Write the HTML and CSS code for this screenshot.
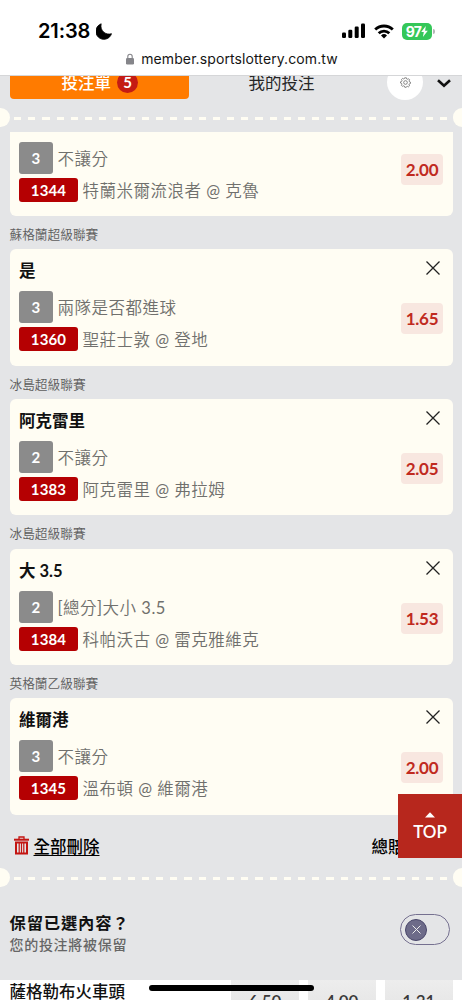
FILE: index.html
```html
<!DOCTYPE html>
<html lang="zh-Hant">
<head>
<meta charset="utf-8">
<title>投注單</title>
<link rel="stylesheet" href="styles.css">
</head>
<body>
<div class="screen">
  <header class="browser">
    <div class="status">
      <span class="time">21:38</span>
      <svg class="moon" width="16" height="17" viewBox="0 0 16 17"><path d="M5.200.8A8 8 0 1 0 15.500 10.700C9.500 12.500 3.600 7.500 5.200.8z" stroke="#000" stroke-width=".8" stroke-linejoin="round"/></svg>
      <svg class="signal" width="24" height="16" viewBox="0 0 24 16"><rect x="0" y="9.500" width="4" height="5.500" rx="1.200"/><rect x="6.300" y="6.700" width="4" height="8.300" rx="1.200"/><rect x="12.700" y="3.600" width="4" height="11.400" rx="1.200"/><rect x="19" y="0.500" width="4" height="14.500" rx="1.200"/></svg>
      <svg class="wifi" width="20" height="15" viewBox="0 0 20 15" fill="none" stroke="#000" stroke-width="2.800"><path d="M1.200 5.600a12.600 12.600 0 0 1 17.600 0"/><path d="M4.700 9.200a7.600 7.600 0 0 1 10.600 0"/><path d="M10 14.500l-3-3.100a4.300 4.300 0 0 1 6 0z" fill="#000" stroke="none"/></svg>
      <span class="battery">97<svg width="7" height="11" viewBox="0 0 7 11"><path d="M4.800 0L.2 6h2.600L1.900 11 6.800 4.700H4.100z" fill="#fff"/></svg></span>
      <i class="battery-tip"></i>
    </div>
    <div class="address">
      <svg width="8" height="12" viewBox="0 0 8 12"><rect y="5" width="8" height="6.500" rx="1.300" fill="#85858a"/><path d="M1.800 5.500V3.400a2.200 2.200 0 0 1 4.400 0v2.100" fill="none" stroke="#85858a" stroke-width="1.100"/></svg>
      <span>member.sportslottery.com.tw</span>
    </div>
  </header>

  <nav class="tabs">
    <div class="tab active"><span>投注單</span><b>5</b></div>
    <div class="tab">我的投注</div>
    <div class="gear"><svg width="11" height="11" viewBox="0 0 12 12" fill="none" stroke="#606060" stroke-width=".8"><path d="M5 .9h2l.3 1.200 1 .4 1.100-.6 1.200 1.300-.7 1 .4 1 1.100.4v1.500l-1.200.4-.4 1 .6 1.100-1.300 1.200-1-.6-1 .4L6.800 11.200H5.200l-.4-1.200-1-.4-1.100.6-1.200-1.300.6-1-.4-1L.6 6.600V5.200l1.200-.4.400-1-.6-1.100L2.900 1.500l1 .6.900-.4z"/><circle cx="6" cy="6" r="2"/></svg></div>
    <svg class="chevron" width="14" height="9" viewBox="0 0 14 9" fill="none" stroke="#111" stroke-width="2.600"><path d="M1 1.300l6 5.500 6-5.500"/></svg>
  </nav>

  <div class="tear"><i></i><span></span><i></i></div>

  <main class="slip">
    <section class="card cut">
      <div class="bet">
        <div class="lines">
          <div class="line"><b class="count">3</b><span>不讓分</span></div>
          <div class="line"><b class="code">1344</b><span>特蘭米爾流浪者 @ 克魯</span></div>
        </div>
        <b class="odds">2.00</b>
      </div>
    </section>
    <h3 class="league">蘇格蘭超級聯賽</h3>
    <section class="card">
      <div class="pick"><strong>是</strong><svg class="close" viewBox="0 0 14 14"><path d="M.5.5l13 13M13.500.5l-13 13"/></svg></div>
      <div class="bet">
        <div class="lines">
          <div class="line"><b class="count">3</b><span>兩隊是否都進球</span></div>
          <div class="line"><b class="code">1360</b><span>聖莊士敦 @ 登地</span></div>
        </div>
        <b class="odds">1.65</b>
      </div>
    </section>
    <h3 class="league">冰島超級聯賽</h3>
    <section class="card">
      <div class="pick"><strong>阿克雷里</strong><svg class="close" viewBox="0 0 14 14"><path d="M.5.5l13 13M13.500.5l-13 13"/></svg></div>
      <div class="bet">
        <div class="lines">
          <div class="line"><b class="count">2</b><span>不讓分</span></div>
          <div class="line"><b class="code">1383</b><span>阿克雷里 @ 弗拉姆</span></div>
        </div>
        <b class="odds">2.05</b>
      </div>
    </section>
    <h3 class="league">冰島超級聯賽</h3>
    <section class="card">
      <div class="pick"><strong>大 3.5</strong><svg class="close" viewBox="0 0 14 14"><path d="M.5.5l13 13M13.500.5l-13 13"/></svg></div>
      <div class="bet">
        <div class="lines">
          <div class="line"><b class="count">2</b><span>[總分]大小 3.5</span></div>
          <div class="line"><b class="code">1384</b><span>科帕沃古 @ 雷克雅維克</span></div>
        </div>
        <b class="odds">1.53</b>
      </div>
    </section>
    <h3 class="league">英格蘭乙級聯賽</h3>
    <section class="card">
      <div class="pick"><strong>維爾港</strong><svg class="close" viewBox="0 0 14 14"><path d="M.5.5l13 13M13.500.5l-13 13"/></svg></div>
      <div class="bet">
        <div class="lines">
          <div class="line"><b class="count">3</b><span>不讓分</span></div>
          <div class="line"><b class="code">1345</b><span>溫布頓 @ 維爾港</span></div>
        </div>
        <b class="odds">2.00</b>
      </div>
    </section>
  </main>

  <div class="summary">
    <svg width="15" height="19" viewBox="0 0 15 19" fill="none" stroke="#c31512"><path d="M0 3.700h15" stroke-width="2"/><path d="M5 3V1h5v2" stroke-width="1.300"/><path d="M2 6.500h11v11H2z" stroke-width="2"/><path d="M5.200 7v10M7.500 7v10M9.800 7v10" stroke-width="1.200"/></svg>
    <a class="clear">全部刪除</a>
    <span class="total">總賠率</span>
  </div>

  <div class="tear second"><i></i><span></span><i></i></div>

  <div class="keep">
    <div>
      <div class="keep-title">保留已選內容？</div>
      <div class="keep-note">您的投注將被保留</div>
    </div>
    <div class="toggle"><span><svg width="9" height="9" viewBox="0 0 9 9"><path d="M.5.5l8 8M8.500.5l-8 8" stroke="#eee" stroke-width="1"/></svg></span></div>
  </div>

  <div class="match">
    <span class="team">薩格勒布火車頭</span>
    <span class="price">6.50</span>
    <span class="price">4.00</span>
    <span class="price">1.31</span>
  </div>

  <div class="top"><svg width="10" height="6" viewBox="0 0 10 6"><path d="M0 5.500L5 .3l5 5.200z" fill="#fff"/></svg><span>TOP</span></div>
  <div class="home"></div>
</div>
</body>
</html>
```
FILE: styles.css
```css
* { box-sizing: border-box; }

body {
  margin: 0;
  font-family: Lato, "Noto Sans CJK TC", sans-serif;
  background: #e4e5e7;
}

svg { flex: none; }

.screen {
  position: relative;
  width: 462px;
  height: 1000px;
  overflow: hidden;
  background: #e4e5e7;
}

.browser {
  position: relative;
  z-index: 1;
  height: 76px;
  background: #fff;
  border-bottom: 1px solid #d5d6d8;
  font-family: Inter, sans-serif;
  color: #000;
}

.status {
  display: flex;
  align-items: center;
  height: 46px;
  padding: 16px 0 0 38px;
}

.time { width: 53px; font-size: 20px; line-height: 24px; font-weight: 600; white-space: nowrap; letter-spacing: -.1px; }
.moon { margin-left: 5px; }
.signal { margin-left: 230px; }
.wifi { margin-left: 8px; }

.battery {
  display: flex;
  align-items: center;
  justify-content: center;
  width: 30px;
  height: 17px;
  margin-left: 8px;
  border-radius: 5px;
  background: #35c759;
  color: #fff;
  font-size: 14px;
  font-weight: 700;
  letter-spacing: -.7px;
}

.battery-tip { width: 1.500px; height: 5px; margin-left: 1px; border-radius: 0 2px 2px 0; background: #b5b5b8; }

.address {
  display: flex;
  align-items: center;
  justify-content: center;
  gap: 7px;
  height: 25px;
  padding-left: 2px;
  font-size: 14px;
  letter-spacing: .1px;
  color: #151515;
}

.tabs {
  display: flex;
  height: 23px;
  padding-left: 9.500px;
}

.tab {
  display: flex;
  justify-content: center;
  width: 179.500px;
  height: 23px;
  font-size: 16.500px;
  line-height: 14px;
  font-weight: 400;
  color: #262626;
}

.tab + .tab { width: 185px; }

.active {
  gap: 6px;
  padding-left: 1px;
  border-radius: 0 0 4px 4px;
  background: #ff7b00;
  color: #fff;
  font-weight: 500;
}

.active b {
  width: 21px;
  height: 21px;
  margin-top: -4px;
  border-radius: 50%;
  background: #c41b14;
  text-align: center;
  font-size: 15px;
  line-height: 21px;
}

.gear {
  display: flex;
  align-items: flex-end;
  justify-content: center;
  width: 36px;
  height: 36px;
  margin: -12px 0 0 13px;
  padding-bottom: 12px;
  border-radius: 50%;
  background: #fff;
}

.chevron { margin: 3px 0 0 14px; }

.tear {
  display: flex;
  align-items: center;
  height: 19px;
  margin-top: 9px;
}

.tear i {
  flex: none;
  width: 9.500px;
  height: 19px;
  background: #fffdf3;
  border-radius: 0 10px 10px 0;
}

.tear i:last-child { border-radius: 10px 0 0 10px; }

.tear span {
  flex: 1;
  height: 2.500px;
  margin: 2px 4.500px 0;
  background: repeating-linear-gradient(90deg, #fffdf3 0 7.200px, transparent 7.200px 14.200px);
}

.slip { padding: 5px 9.500px 0; }

.card {
  height: 116.400px;
  padding: 0 9.500px;
  border-radius: 6px;
  background: #fffdf3;
}

.cut { height: 84px; padding-top: 10px; border-radius: 0 0 6px 6px; }

.pick { display: flex; justify-content: space-between; height: 42px; }
.pick strong { font-size: 16.500px; line-height: 44px; font-weight: 700; color: #111; }
.close { width: 14px; height: 14px; margin: 12px 3px 0 0; fill: none; stroke: #222; stroke-width: 1.300; }

.bet { display: flex; justify-content: space-between; }
.lines { display: flex; flex-direction: column; gap: 4px; }

.line {
  display: flex;
  align-items: center;
  gap: 4.500px;
  font-family: Lato, "Noto Sans CJK TC DemiLight", "Noto Sans CJK TC", sans-serif;
  font-size: 16.500px;
  font-weight: 400;
  letter-spacing: .5px;
  color: #70706d;
  white-space: nowrap;
}

.line span { line-height: 22px; margin-top: 2px; }
.line b { color: #fff; font-size: 15px; font-weight: 700; letter-spacing: .15px; text-align: center; border-radius: 3px; }

.count { width: 34px; height: 32px; line-height: 32px; background: #8b8b8b; }
.code { width: 59px; height: 24px; line-height: 24px; background: #b50002; }

.odds {
  width: 42px;
  height: 31px;
  margin-top: 12px;
  border-radius: 4px;
  background: #f8e7e0;
  color: #c02a20;
  font-size: 17px;
  line-height: 31px;
  font-weight: 700;
  letter-spacing: -.3px;
  text-align: center;
}

.league {
  height: 33.300px;
  margin: 0;
  font-size: 12.700px;
  line-height: 37px;
  font-weight: 350;
  color: #5d5d5d;
}

.summary {
  display: flex;
  align-items: center;
  height: 62px;
  padding: 0 41px 0 14px;
  font-size: 16.500px;
  font-weight: 500;
  color: #000;
}

.clear { margin-left: 4.500px; text-decoration: underline; text-decoration-thickness: 1px; text-underline-offset: 2px; }
.total { margin-left: auto; }

.second { margin-top: -9px; }

.keep {
  display: flex;
  justify-content: space-between;
  height: 93px;
  padding: 24px 12px 0 9.500px;
}

.keep-title { font-size: 16.300px; line-height: 23px; font-weight: 700; letter-spacing: .85px; color: #111; }
.keep-note { font-size: 14px; line-height: 22px; font-weight: 500; letter-spacing: .7px; color: #666; }

.toggle {
  width: 50px;
  height: 31px;
  margin-top: 3px;
  padding: 4px;
  border: 1px solid #757090;
  border-radius: 16px;
}

.toggle span {
  display: flex;
  align-items: center;
  justify-content: center;
  width: 22px;
  height: 22px;
  border: 1px solid #49466a;
  border-radius: 50%;
  background: #6d6b89;
}

.match {
  display: flex;
  height: 20px;
  padding-left: 9.500px;
  overflow: hidden;
  background: #fff;
}

.team { width: 221.500px; font-size: 16.500px; line-height: 24px; font-weight: 500; color: #111; }

.price {
  width: 67.500px;
  height: 40px;
  margin-right: 9.500px;
  padding-top: 13px;
  background: linear-gradient(#ededed, #e8e8e8 20px);
  font-size: 17px;
  line-height: 17px;
  font-weight: 600;
  letter-spacing: -.1px;
  color: #3a3a3a;
  text-align: center;
}

.top {
  position: absolute;
  right: 0;
  top: 794px;
  display: flex;
  flex-direction: column;
  align-items: center;
  width: 64px;
  height: 64px;
  padding-top: 18px;
  background: #b7271d;
  color: #fff;
  font-size: 17px;
  line-height: 20px;
  font-weight: 600;
}

.top span { margin-top: 4px; }

.home {
  position: absolute;
  left: 149px;
  top: 985px;
  width: 165px;
  height: 5.500px;
  border-radius: 3px;
  background: #000;
}
```
